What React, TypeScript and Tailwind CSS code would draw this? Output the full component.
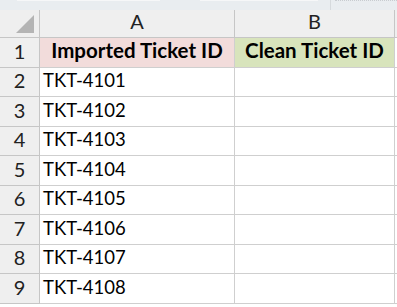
const rows = [
  'TKT-4101',
  'TKT-4102',
  'TKT-4103',
  'TKT-4104',
  'TKT-4105',
  'TKT-4106',
  'TKT-4107',
  'TKT-4108',
]

const font = { fontFamily: 'Lato, "Liberation Sans", sans-serif' }

export default function App() {
  return (
    <div className="w-[397px] h-[307px] overflow-hidden bg-white text-black" style={font}>
      {/* toolbar remnant */}
      <div className="h-[10px] bg-[#e9edf0] flex items-start">
        <div className="ml-[17px] w-[143px] h-px bg-[#f6f7f8]" />
        <div className="ml-[40px] w-[118px] h-px bg-[#f6f7f8]" />
        <div className="ml-[12px] w-px h-[10px] bg-[#d6dadd]" />
        <div className="ml-[4px] flex-1 h-px border-t border-dotted border-[#c8ccd0]" />
      </div>

      <div className="grid grid-cols-[40px_195px_160px_1fr]">
        {/* column headers */}
        <div className="h-[28px] bg-[#efefef] border-r border-b border-[#c6c6c6] relative">
          <svg className="absolute right-[5px] bottom-[4px]" width="18" height="18" viewBox="0 0 18 18">
            <polygon points="18,0 18,18 0,18" fill="#b4b4b4" />
          </svg>
        </div>
        <div className="h-[28px] bg-[#efefef] border-r border-b border-[#c6c6c6] flex items-end justify-center pb-[1px] text-[20px] text-[#222]">
          A
        </div>
        <div className="h-[28px] bg-[#efefef] border-r border-b border-[#c6c6c6] flex items-end justify-center pb-[1px] text-[20px] text-[#222]">
          B
        </div>
        <div className="h-[28px] bg-[#efefef] border-b border-[#c6c6c6]" />

        {/* row 1 */}
        <div className="h-[29.5px] bg-[#efefef] border-r border-b border-[#c6c6c6] flex items-end justify-center pb-[1px] text-[20px] text-[#222]">
          1
        </div>
        <div className="h-[29.5px] bg-[#f2dcdb] border-r border-b border-[#cfcfcf] flex items-end justify-center pb-[1px] text-[20.5px] font-bold">
          Imported Ticket ID
        </div>
        <div className="h-[29.5px] bg-[#d8e4bc] border-r border-b border-[#cfcfcf] flex items-end justify-center pb-[1px] text-[20.5px] font-bold">
          Clean Ticket ID
        </div>
        <div className="h-[29.5px] border-b border-[#cfcfcf]" />

        {rows.map((id, i) => (
          <Row key={id} n={i + 2} id={id} />
        ))}
      </div>
    </div>
  )
}

function Row({ n, id }: { n: number; id: string }) {
  return (
    <>
      <div className="h-[29.5px] bg-[#efefef] border-r border-b border-[#c6c6c6] flex items-end justify-center pb-[1px] text-[20px] text-[#222]">
        {n}
      </div>
      <div className="h-[29.5px] border-r border-b border-[#cfcfcf] flex items-end pl-[3px] pb-[1px] text-[18.5px]">
        {id}
      </div>
      <div className="h-[29.5px] border-r border-b border-[#cfcfcf]" />
      <div className="h-[29.5px] border-b border-[#cfcfcf]" />
    </>
  )
}
